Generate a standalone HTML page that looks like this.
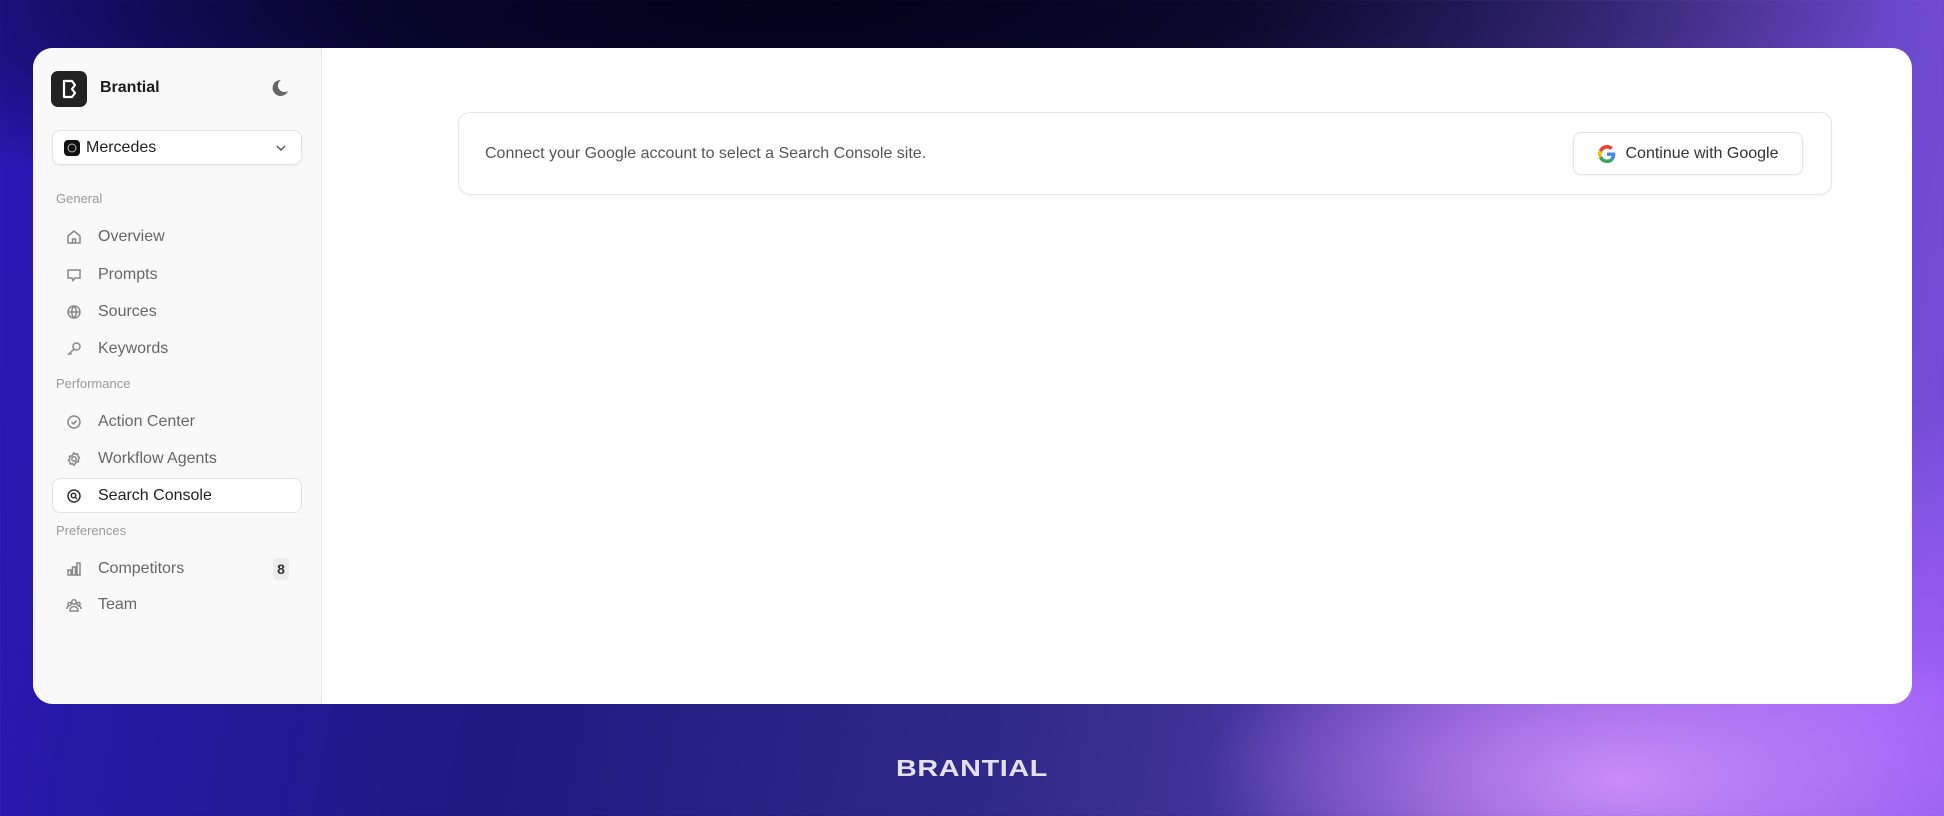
<!DOCTYPE html>
<html><head><meta charset="utf-8"><style>
*{margin:0;padding:0;box-sizing:border-box}
body{width:1944px;height:816px;overflow:hidden;font-family:"Liberation Sans",sans-serif;position:relative;
background:
radial-gradient(ellipse 420px 180px at 1620px 780px,rgba(215,150,255,0.85),rgba(215,150,255,0) 100%),
radial-gradient(ellipse 700px 300px at 1900px 700px,rgba(170,100,255,0.8),rgba(170,100,255,0) 100%),
radial-gradient(ellipse 1100px 240px at 800px 0px,#02021a 0%,rgba(2,2,26,0.85) 40%,rgba(2,2,26,0) 100%),
linear-gradient(100deg,#2a18b8 0%,#1e1a80 30%,#302a8a 55%,#5a3fb0 80%,#7a50e0 100%);}
.card{position:absolute;left:33px;top:48px;width:1879px;height:656px;background:#fff;border-radius:20px;overflow:hidden}
.side{position:absolute;left:0;top:0;width:289px;height:100%;background:#f9f9f9;border-right:1px solid #e8e8e8}
.abs{position:absolute}
.logo{left:18px;top:23px;width:36px;height:36px;background:#222;border-radius:7px}
.brand{left:67px;top:31px;font-size:16px;font-weight:bold;color:#1a1a1a}
.dd{left:19px;top:82px;width:250px;height:35px;background:#fff;border:1px solid #e3e3e3;border-radius:8px;box-shadow:0 1px 2px rgba(0,0,0,.05)}
.lbl{font-size:13px;color:#999;left:23px}
.item{left:33px;font-size:16px;line-height:18px;color:#666;display:flex;align-items:center;gap:16px}
.item svg{width:16px;height:16px;fill:none;stroke:#888;stroke-width:1.5}
.active{left:19px;top:430px;width:250px;height:35px;background:#fff;border:1px solid #e3e3e3;border-radius:8px}
.main-box{left:425px;top:64px;width:1374px;height:83px;border:1px solid #e6e6e6;border-radius:12px;box-shadow:0 1px 3px rgba(0,0,0,.04)}
.btn{left:1540px;top:84px;width:230px;height:43px;border:1px solid #e3e3e3;border-radius:8px;background:#fff;box-shadow:0 1px 2px rgba(0,0,0,.06);display:flex;align-items:center;justify-content:center;gap:10px;font-size:16px;color:#333}
</style></head><body>
<div class="card">
<div class="side">
 <div class="abs logo"><svg width="36" height="36" viewBox="0 0 36 36"><path d="M13 10h8l3 4-3 4 3 4-3 4h-8z" fill="none" stroke="#fff" stroke-width="2.2" stroke-linejoin="round"/></svg></div>
 <div class="abs brand">Brantial</div>
 <svg class="abs" style="left:236px;top:30px" width="20" height="20" viewBox="0 0 20 20"><path d="M12 2a8 8 0 1 0 7 11A6.5 6.5 0 0 1 12 2z" fill="#666"/></svg>
 <div class="abs dd">
  <div class="abs" style="left:11px;top:9px;width:16px;height:16px;background:#111;border-radius:4px"><svg width="16" height="16" viewBox="0 0 16 16"><circle cx="8" cy="8" r="4" fill="none" stroke="#bbb" stroke-width="1"/></svg></div>
  <div class="abs" style="left:33px;top:8px;font-size:16px;color:#222">Mercedes</div>
  <svg class="abs" style="left:222px;top:11px" width="12" height="12" viewBox="0 0 12 12"><path d="M2 4l4 4 4-4" fill="none" stroke="#555" stroke-width="1.4"/></svg>
 </div>
 <div class="abs lbl" style="top:143px">General</div>
 <div class="abs item" style="top:180px"><svg viewBox="0 0 16 16"><path d="M2 7l6-5 6 5v7H2z M6.5 14v-4h3v4"/></svg>Overview</div>
 <div class="abs item" style="top:218px"><svg viewBox="0 0 16 16"><path d="M2 3h12v8H9l-2 2.5-1-2.5H2z"/></svg>Prompts</div>
 <div class="abs item" style="top:255px"><svg viewBox="0 0 16 16"><circle cx="8" cy="8" r="6"/><path d="M2 8h12M8 2c-3 3.5-3 8.5 0 12M8 2c3 3.5 3 8.5 0 12"/></svg>Sources</div>
 <div class="abs item" style="top:292px"><svg viewBox="0 0 16 16"><circle cx="10.5" cy="5.5" r="3.5"/><path d="M8 8l-6 6M4 12l1.5 1.5"/></svg>Keywords</div>
 <div class="abs lbl" style="top:328px">Performance</div>
 <div class="abs item" style="top:365px"><svg viewBox="0 0 16 16"><circle cx="8" cy="8" r="6"/><path d="M5.5 8l2 2 3-3.5"/></svg>Action Center</div>
 <div class="abs item" style="top:402px"><svg viewBox="0 0 16 16"><circle cx="8" cy="8" r="2.2"/><path d="M8 1.8l1.5 1.5 2.2-.3.3 2.2 1.5 1.5-1.3 1.8.3 2.2-2.2.3L8 14.2l-1.5-1.5-2.2.3-.3-2.2L2.5 9.3 3.8 7.5 3.5 5.3l2.2-.3z"/></svg>Workflow Agents</div>
 <div class="abs active"></div>
 <div class="abs item" style="top:439px;color:#222"><svg viewBox="0 0 16 16" style="stroke:#333"><circle cx="8" cy="8" r="6"/><circle cx="7.5" cy="7.5" r="2.3"/><path d="M9.2 9.2l1.8 1.8"/></svg>Search Console</div>
 <div class="abs lbl" style="top:475px">Preferences</div>
 <div class="abs item" style="top:512px"><svg viewBox="0 0 16 16"><path d="M2 14V9h3v5zM6.5 14V6h3v8zM11 14V2h3v12z"/></svg>Competitors</div>
 <div class="abs" style="left:240px;top:510px;width:16px;height:22px;background:#ececec;border-radius:4px;font-size:14px;font-weight:bold;color:#333;text-align:center;line-height:22px">8</div>
 <div class="abs item" style="top:548px"><svg viewBox="0 0 16 16"><circle cx="8" cy="5" r="2.3"/><circle cx="3.5" cy="7" r="1.6"/><circle cx="12.5" cy="7" r="1.6"/><path d="M4 14c0-3 1.8-4.5 4-4.5s4 1.5 4 4.5z M1 12c0-2 1-3 2.5-3M15 12c0-2-1-3-2.5-3"/></svg>Team</div>
</div>
<div class="abs main-box"></div>
<div class="abs" style="left:452px;top:97px;font-size:16px;color:#555">Connect your Google account to select a Search Console site.</div>
<div class="abs btn"><svg width="18" height="18" viewBox="0 0 48 48"><path fill="#EA4335" d="M24 9.5c3.5 0 6.6 1.2 9 3.5l6.7-6.7C35.6 2.4 30.2 0 24 0 14.6 0 6.6 5.4 2.7 13.3l7.8 6C12.4 13.6 17.7 9.5 24 9.5z"/><path fill="#4285F4" d="M46.1 24.5c0-1.6-.1-3.1-.4-4.5H24v9h12.4c-.5 2.9-2.2 5.3-4.6 7l7.5 5.8c4.4-4 6.8-10 6.8-17.3z"/><path fill="#FBBC05" d="M10.5 28.7c-.5-1.4-.8-3-.8-4.7s.3-3.2.8-4.7l-7.8-6C1 16.6 0 20.2 0 24s1 7.4 2.7 10.7z"/><path fill="#34A853" d="M24 48c6.5 0 11.9-2.1 15.9-5.8l-7.5-5.8c-2.1 1.4-4.8 2.3-8.4 2.3-6.3 0-11.6-4.1-13.5-9.8l-7.8 6C6.6 42.6 14.6 48 24 48z"/></svg>Continue with Google</div>
</div>
<div class="abs" style="left:0;width:1944px;top:755px;text-align:center;font-size:23px;font-weight:bold;color:#e4e0ee;letter-spacing:0.5px;transform:scaleX(1.25)">BRANTIAL</div>
</body></html>
